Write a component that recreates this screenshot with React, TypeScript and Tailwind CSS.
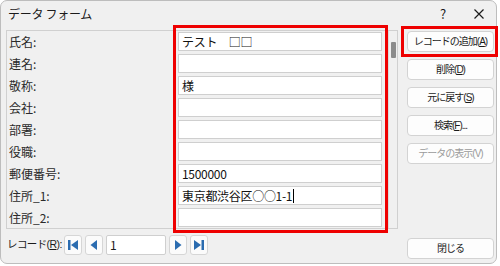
import React from "react";

const font = { fontFamily: '"Noto Sans CJK JP", "Noto Sans", sans-serif' };
const mixed = { fontFamily: '"Liberation Sans", "Noto Sans CJK JP", sans-serif' };

const fields: { label: string; value: string; cursor?: boolean }[] = [
	{ label: "氏名:", value: "テスト　□□" },
	{ label: "連名:", value: "" },
	{ label: "敬称:", value: "様" },
	{ label: "会社:", value: "" },
	{ label: "部署:", value: "" },
	{ label: "役職:", value: "" },
	{ label: "郵便番号:", value: "1500000" },
	{ label: "住所_1:", value: "東京都渋谷区○○1-1", cursor: true },
	{ label: "住所_2:", value: "" },
];

function Btn(props: { text: string; acc?: string; tail?: string; disabled?: boolean; className?: string }) {
	const { text, acc, tail, disabled, className } = props;
	return (
		<div
			style={mixed}
			className={`w-[87px] h-[21px] flex items-center justify-center whitespace-nowrap tracking-[-1px] rounded-[4px] border border-[#d3d3d3] bg-[#fdfdfd] text-[10px] ${
				disabled ? "text-[#9a9a9a]" : "text-[#1b1b1b]"
			} ${className ?? ""}`}
		>
			{text}
			{acc && (
				<>
					(<span className="underline">{acc}</span>){tail}
				</>
			)}
		</div>
	);
}

function NavBtn(props: { kind: "first" | "prev" | "next" | "last" }) {
	const { kind } = props;
	return (
		<div className="w-[18px] h-[20px] flex items-center justify-center rounded-[3px] border border-[#d6d6d6] bg-[#fbfbfb]">
			<svg width="12" height="12" viewBox="0 0 12 12">
				{kind === "first" && (
					<>
						<rect x="1" y="1" width="2.5" height="10" fill="#2b6cb0" />
						<polygon points="11,1 11,11 4,6" fill="#2b6cb0" />
					</>
				)}
				{kind === "prev" && <polygon points="9,1 9,11 2.5,6" fill="#2b6cb0" />}
				{kind === "next" && <polygon points="3,1 3,11 9.5,6" fill="#2b6cb0" />}
				{kind === "last" && (
					<>
						<polygon points="1,1 1,11 8,6" fill="#2b6cb0" />
						<rect x="8.5" y="1" width="2.5" height="10" fill="#2b6cb0" />
					</>
				)}
			</svg>
		</div>
	);
}

export default function App() {
	return (
		<div className="relative w-[500px] h-[266px] bg-white overflow-hidden" style={font}>
			{/** dialog window */}
			<div className="w-[497px] h-[264px] bg-[#f0f0f0] border border-[#bdbdbd] rounded-[7px] flex flex-col text-[#1b1b1b]">
				{/** title bar */}
				<div className="h-[26px] flex items-center pl-[7px] pr-[12px] text-[12px]">
					<div className="flex-1 tracking-[-0.3px]">データ フォーム</div>
					<div className="w-[20px] text-center text-[13px] mr-[21px]">?</div>
					<svg width="10" height="10" viewBox="0 0 10 10">
						<path d="M0.5 0.5 L9.5 9.5 M9.5 0.5 L0.5 9.5" stroke="#1b1b1b" strokeWidth="1.2" />
					</svg>
				</div>

				<div className="flex flex-1 pl-[5px]">
					{/** left column */}
					<div className="w-[392px] flex flex-col">
						<div className="mt-[3px] h-[199px] border border-[#d0d0d0] flex">
							<div className="flex-1 flex flex-col pt-[1px] gap-[3px]">
								{fields.map((f) => (
									<div key={f.label} className="flex items-center h-[19px]">
										<div className="w-[171px] pl-[2px] text-[12px] text-[#2a2a2a] whitespace-nowrap">{f.label}</div>
										<div className="w-[204px] h-[19px] bg-white border border-[#cfcfcf] flex items-center pl-[3px] text-[12px] text-[#111] whitespace-nowrap tracking-[-0.3px]">
											{f.value}
											{f.cursor && <span className="inline-block w-[1px] h-[14px] bg-black ml-[1px]" />}
										</div>
									</div>
								))}
							</div>
							{/** scrollbar */}
							<div className="w-[9px] border-l border-[#dadada] pt-[11px] flex justify-center">
								<div className="w-[5px] h-[16px] bg-[#8c8c8c] rounded-[1px]" />
							</div>
						</div>

						{/** record navigation */}
						<div className="flex items-center mt-[5px] h-[21px]">
							<div style={mixed} className="w-[58px] pl-[1px] whitespace-nowrap text-[10.5px] tracking-[-0.6px]">
								レコード(<span className="underline">R</span>):
							</div>
							<div className="flex items-center gap-[3px] text-[12px]">
								<NavBtn kind="first" />
								<NavBtn kind="prev" />
								<div className="w-[60px] h-[20px] bg-white border border-[#cfcfcf] rounded-[2px] flex items-center pl-[3px]">1</div>
								<NavBtn kind="next" />
								<NavBtn kind="last" />
							</div>
						</div>
					</div>

					{/** right column */}
					<div className="ml-[9px] flex flex-col gap-[7px] pt-[4px] pb-[4px]">
						<Btn text="レコードの追加" acc="A" />
						<Btn text="削除" acc="D" />
						<Btn text="元に戻す" acc="S" />
						<Btn text="検索" acc="F" tail="..." />
						<Btn text="データの表示(V)" disabled />
						<Btn text="閉じる" className="mt-auto" />
					</div>
				</div>
			</div>

			{/** red highlight boxes */}
			<div className="absolute left-[173px] top-[25px] w-[215px] h-[208px] border-[3.5px] border-[#ee0000]" />
			<div className="absolute left-[401px] top-[26px] w-[97px] h-[31px] border-[3.5px] border-[#ee0000]" />
		</div>
	);
}
